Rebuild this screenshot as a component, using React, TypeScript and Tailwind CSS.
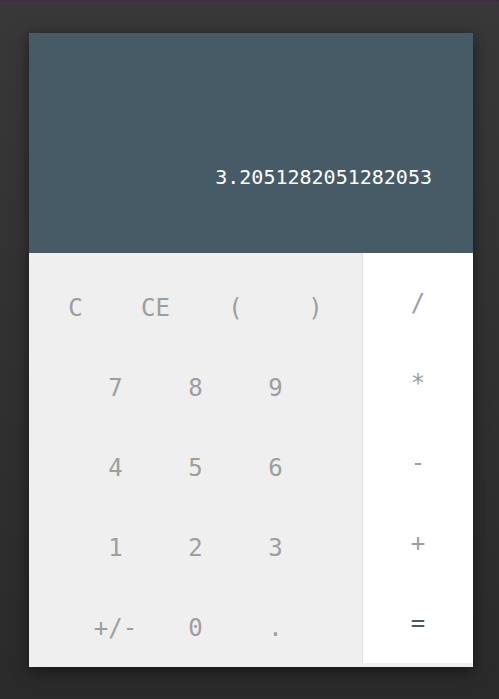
const topRow = ["C", "CE", "(", ")"];
const numRows = [
  ["7", "8", "9"],
  ["4", "5", "6"],
  ["1", "2", "3"],
  ["+/-", "0", "."],
];
const ops = ["/", "*", "-", "+"];

function Key({ label, className = "" }: { label: string; className?: string }) {
  return (
    <button className={`flex h-20 w-20 items-center justify-center text-[24px] ${className}`}>
      {label}
    </button>
  );
}

export default function App() {
  return (
    <div
      className="min-h-[699px] w-full border-t border-[#3d2c42] bg-gradient-to-b from-[#383838] to-[#2a2a2a] pt-[32px]"
      style={{ fontFamily: '"DejaVu Sans Mono", monospace' }}
    >
      <div className="ml-[29px] w-[444px] bg-[#efefef] shadow-[0_4px_14px_rgba(0,0,0,0.5)]">
        {/* display */}
        <div className="flex h-[220px] items-end justify-end bg-[#475b66] pb-[66px] pr-[41px]">
          <span className="text-[20px] leading-none text-white">3.2051282051282053</span>
        </div>

        <div className="flex h-[414px]">
          {/* numbers */}
          <div className="flex flex-1 flex-col pt-[15px] text-[#9e9e9e]">
            <div className="flex justify-center">
              {topRow.map((k) => (
                <Key key={k} label={k} />
              ))}
            </div>
            {numRows.map((row, i) => (
              <div key={i} className="flex justify-center">
                {row.map((k) => (
                  <Key key={k} label={k} />
                ))}
              </div>
            ))}
          </div>

          {/* operators */}
          <div className="flex h-[410px] w-[111px] flex-col items-center border-l border-[#e2e2e2] bg-white pt-[10px] text-[#9e9e9e]">
            {ops.map((k) => (
              <Key key={k} label={k} />
            ))}
            <Key label="=" className="text-[#475b66]" />
          </div>
        </div>
      </div>
    </div>
  );
}
